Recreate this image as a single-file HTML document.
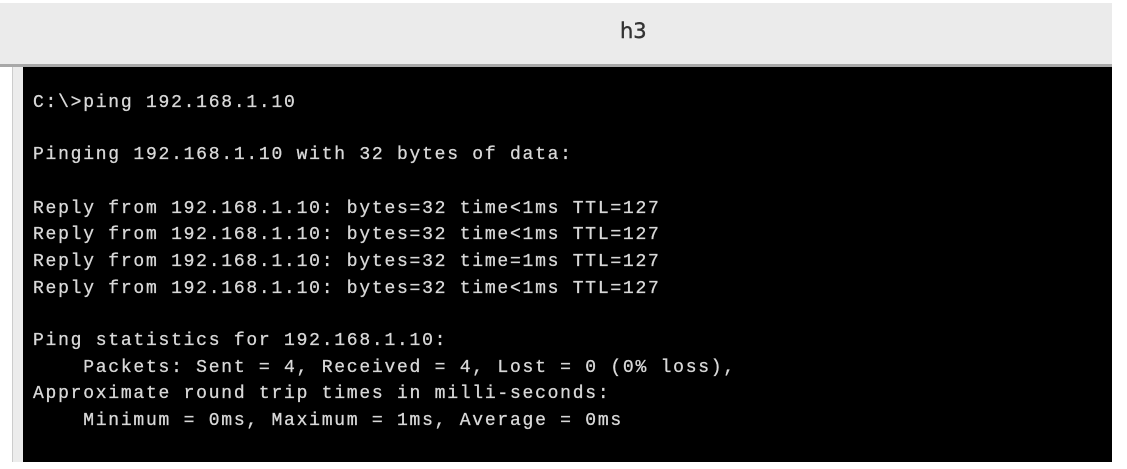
<!DOCTYPE html>
<html><head><style>
html,body{margin:0;padding:0;width:1127px;height:469px;background:#fff;overflow:hidden}
#title{position:absolute;left:0;top:3px;width:1112px;height:61px;background:#ebebeb;border-bottom:3px solid #a8a8a8}
#title span{position:absolute;left:620px;top:16px;font:21px "DejaVu Sans","Liberation Sans",sans-serif;color:#333;-webkit-text-stroke:0.4px #333}
#lcol{position:absolute;left:12px;top:67px;width:11px;height:395px;background:#ececec;border-left:1px solid #ccc}
#term{position:absolute;left:23px;top:67px;width:1089px;height:395px;background:#000}
.l{position:absolute;left:33px;font:18px "Liberation Mono",monospace;letter-spacing:1.75px;color:#d8d8d8;white-space:pre;line-height:20px;-webkit-text-stroke:0.3px #d8d8d8}
</style></head><body>
<div id="title"><span>h3</span></div>
<div id="lcol"></div>
<div id="term"></div>
<div class="l" style="top:93px">C:\&gt;ping 192.168.1.10</div>
<div class="l" style="top:145px">Pinging 192.168.1.10 with 32 bytes of data:</div>
<div class="l" style="top:199px">Reply from 192.168.1.10: bytes=32 time&lt;1ms TTL=127</div>
<div class="l" style="top:225px">Reply from 192.168.1.10: bytes=32 time&lt;1ms TTL=127</div>
<div class="l" style="top:252px">Reply from 192.168.1.10: bytes=32 time=1ms TTL=127</div>
<div class="l" style="top:279px">Reply from 192.168.1.10: bytes=32 time&lt;1ms TTL=127</div>
<div class="l" style="top:331px">Ping statistics for 192.168.1.10:</div>
<div class="l" style="top:358px">    Packets: Sent = 4, Received = 4, Lost = 0 (0% loss),</div>
<div class="l" style="top:384px">Approximate round trip times in milli-seconds:</div>
<div class="l" style="top:411px">    Minimum = 0ms, Maximum = 1ms, Average = 0ms</div>
</body></html>
